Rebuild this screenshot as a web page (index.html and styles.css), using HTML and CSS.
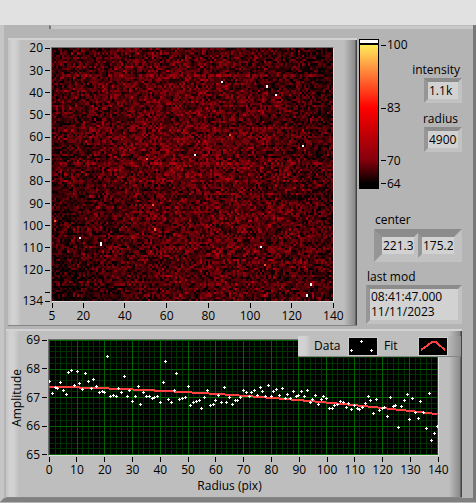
FILE: index.html
```html
<!DOCTYPE html>
<html lang="en">
<head>
    <meta charset="UTF-8">
    <meta name="viewport" content="width=device-width, initial-scale=1.0">
    <title>Radial intensity</title>
    <link rel="stylesheet" href="styles.css">
</head>
<body>
    <div class="top-strip"></div>

    <main class="front">
        <div class="tab-edge"></div>

        <div class="upper">
            <section class="panel image-panel">
                <svg class="axis" id="image-y"></svg>
                <canvas class="image" id="image" width="135" height="115"></canvas>
                <svg class="axis x-axis" id="image-x"></svg>
            </section>

            <section class="side">
                <div class="side-top">
                    <div class="ramp">
                        <div class="ramp-over"></div>
                        <div class="ramp-colors"></div>
                    </div>
                    <svg class="ramp-axis" id="ramp-axis"></svg>
                    <div class="readouts">
                        <label for="intensity">intensity</label>
                        <input type="text" id="intensity" class="field" value="1.1k" readonly>
                        <label for="radius" class="radius-label">radius</label>
                        <input type="text" id="radius" class="field" value="49000" readonly>
                    </div>
                </div>

                <div class="center-group">
                    <label for="center-x">center</label>
                    <div class="cluster">
                        <input type="text" id="center-x" class="field" value="221.36" readonly>
                        <input type="text" class="field" value="175.24" aria-label="center y" readonly>
                    </div>
                </div>

                <div class="mod-group">
                    <label for="last-mod">last mod</label>
                    <textarea id="last-mod" class="field" rows="2" readonly>08:41:47.000
11/11/2023</textarea>
                </div>
            </section>
        </div>

        <section class="panel graph-panel">
            <div class="y-title">Amplitude</div>
            <svg class="axis" id="graph-y"></svg>
            <svg class="plot" id="plot" viewBox="0 0 389 115" preserveAspectRatio="none">
                <path class="minor" id="minor"/>
                <path class="major" id="major"/>
                <path class="fit" id="fit"/>
                <path class="points" id="points"/>
            </svg>
            <svg class="axis x-axis" id="graph-x"></svg>
            <div class="x-title">Radius (pix)</div>

            <div class="legend">
                <span class="legend-data">Data</span>
                <svg class="swatch" width="28" height="17">
                    <path class="points" d="M1 12.5h3M2.5 11v3M11 3.5h3M12.5 2v3M21 12.5h3M22.5 11v3"/>
                </svg>
                <span class="legend-fit">Fit</span>
                <svg class="swatch" width="28" height="17">
                    <path class="fit" d="M2 12L14 3.5h2L26 12"/>
                </svg>
            </div>
        </section>
    </main>

    <script src="script.js"></script>
</body>
</html>
```

FILE: styles.css
```css
* {
    box-sizing: border-box;
}
body {
    margin: 0;
    background-color: #b4b4b4;
    color: #000;
    font-family: "Open Sans", "Noto Sans", sans-serif;
    font-size: 12px;
    line-height: 16px;
}
label {
    display: block;
}
.top-strip {
    height: 25px;
    background-color: #e1e1e1;
}
.front {
    padding: 0 11px 0 2px;
    border-left: 4px solid #c6c6c6;
    border-right: 3px solid #787878;
    border-bottom: 4px solid #808080;
}
.tab-edge {
    height: 4px;
    margin: 0 -11px 9px 43px;
    border-left: 2px solid #777;
    border-top: 1px solid #bcbcbc;
    background-color: #c8c8c8;
}
.upper {
    display: flex;
    padding-left: 2px;
}

/* Raised panels */
.panel {
    display: grid;
    border-top: 2px solid #d2d2d2;
    border-bottom: 1px solid #858585;
    background:
        linear-gradient(to right, #c4c4c4, #d2d2d2 4px, #d0d0d0 8px, #bebebe) left / 13px 100% no-repeat,
        linear-gradient(to right, #bebebe, #8a8a8a 11px, #444 12px) right / 13px 100% no-repeat,
        #bebebe;
}
.image-panel {
    flex: 1;
    grid-template-columns: 31px 1fr;
    padding: 7px 23px 1px 12px;
}
.graph-panel {
    position: relative;
    grid-template-columns: 14px 24px 1fr;
    margin-top: 3px;
    padding: 8px 23px 3px 4px;
}
.image {
    width: 100%;
    height: 255px;
    border: 1px solid #6e6e6e;
    border-right-color: #ddd;
    border-bottom-color: #ddd;
    image-rendering: pixelated;
}

/* Axes */
.axis {
    width: 100%;
    height: 0;
    min-height: 100%;
    overflow: visible;
}
.x-axis {
    height: 22px;
}
.image-panel .x-axis {
    grid-column: 2;
}
.graph-panel .x-axis {
    grid-column: 3;
}
.axis line,
.ramp-axis line {
    stroke: #000;
    shape-rendering: crispEdges;
}

/* Color ramp and readouts */
.side {
    width: 105px;
    padding-top: 1px;
}
.side-top {
    display: flex;
    padding-left: 2px;
}
.ramp {
    width: 20px;
    height: 150px;
    border: 1px solid #000;
}
.ramp-over {
    height: 5px;
    background-color: #fff;
    border-bottom: 2px solid #000;
}
.ramp-colors {
    height: 143px;
    background: linear-gradient(#ffec5a, #ff9440 16%, #f00 44%, #82000c 81%, #000 97%);
}
.ramp-axis {
    width: 28px;
    height: 150px;
    overflow: visible;
}
.readouts {
    display: flex;
    flex: 1;
    flex-direction: column;
    align-items: flex-end;
    padding-top: 23px;
}
.readouts label {
    margin-right: 2px;
}
.readouts .radius-label {
    margin: 8px 4px 0 0;
}
.field {
    display: block;
    margin: 0;
    border: 4px solid;
    border-color: #8c8c8c #c2c2c2 #c2c2c2 #969696;
    border-radius: 0;
    padding: 0 1px;
    background-color: #d2d2d2;
    color: #000;
    font: inherit;
    outline: none;
    resize: none;
    overflow: hidden;
}
.readouts .field {
    width: 38px;
    height: 25px;
}
.center-group {
    padding: 23px 0 0 17px;
}
.center-group label {
    padding: 0 0 1px 1px;
}
.cluster {
    display: flex;
    height: 33px;
    border: 4px solid;
    border-color: #8c8c8c #c2c2c2 #c2c2c2 #969696;
}
.cluster .field {
    width: 50%;
    height: 25px;
    padding: 0 1px;
}
.mod-group {
    padding: 7px 0 0 9px;
}
.mod-group label {
    padding-left: 1px;
}
.mod-group .field {
    width: 100%;
    height: 39px;
    line-height: 15px;
}

/* Graph */
.plot {
    width: 100%;
    height: 117px;
    border: 1px solid #6e6e6e;
    border-right-color: #ddd;
    border-bottom-color: #ddd;
    background-color: #000;
}
.minor,
.major,
.points,
.fit {
    fill: none;
    shape-rendering: crispEdges;
}
.minor {
    stroke: #003200;
}
.major {
    stroke: #006400;
}
.points {
    stroke: #fff;
}
.fit {
    stroke: #ff4141;
    stroke-width: 2;
}
.y-title {
    grid-column: 1;
    justify-self: center;
    align-self: center;
    line-height: 14px;
    writing-mode: vertical-rl;
    transform: rotate(180deg);
}
.x-title {
    grid-column: 3;
    padding-right: 28px;
    text-align: center;
}
.legend {
    position: absolute;
    top: 5px;
    right: 1px;
    display: flex;
    align-items: center;
    width: 163px;
    height: 21px;
    padding-left: 16px;
    border-bottom: 1px solid #858585;
    background: linear-gradient(to right, #d2d2d2, #d2d2d2 7px, #bebebe 13px, #bebebe 148px, #909090);
}
.legend-data {
    width: 35px;
}
.legend-fit {
    width: 42px;
    padding-left: 7px;
}
.swatch {
    background-color: #000;
    box-shadow: 0 0 0 1px #ccc;
}
```

FILE: script.js
```js
const SVG_NS = 'http://www.w3.org/2000/svg';

function addNode(svg, name, attrs, text) {
    const node = document.createElementNS(SVG_NS, name);
    for (const key in attrs) {
        node.setAttribute(key, attrs[key]);
    }
    if (text) {
        node.textContent = text;
    }
    svg.appendChild(node);
}

// ticks: [label, position from 0 to 1]
function drawXAxis(id, ticks) {
    const svg = document.getElementById(id);
    ticks.forEach(([label, pos]) => {
        const x = pos * 100 + '%';
        addNode(svg, 'line', { x1: x, x2: x, y1: 1, y2: 6 });
        addNode(svg, 'text', { x: x, y: 18, 'text-anchor': 'middle' }, label);
    });
}

function drawYAxis(id, ticks, width) {
    const svg = document.getElementById(id);
    ticks.forEach(([label, pos]) => {
        const y = pos * 100 + '%';
        addNode(svg, 'line', { x1: width - 6, x2: width - 1, y1: y, y2: y });
        addNode(svg, 'text', { x: width - 8, y: y, dy: 4, 'text-anchor': 'end' }, label);
    });
}

// Image axes
const imageY = [20, 30, 40, 50, 60, 70, 80, 90, 100, 110, 120, 130, 134];
drawYAxis('image-y', imageY.map(v => [v === 130 ? '' : String(v), (v - 19.4) / 115]), 31);
const imageX = [5, 20, 40, 60, 80, 100, 120, 140];
drawXAxis('image-x', imageX.map(v => [String(v), (v - 4.5) / 135.8]));

// Ramp axis
const rampTicks = [['100', 0.04], ['83', 0.46], ['70', 0.81], ['64', 0.965]];
const rampAxis = document.getElementById('ramp-axis');
rampTicks.forEach(([label, pos]) => {
    const y = pos * 100 + '%';
    addNode(rampAxis, 'line', { x1: 2, x2: 7, y1: y, y2: y });
    addNode(rampAxis, 'text', { x: 8, y: y, dy: 4 }, label);
});

// Sensor image
const COLS = 135;
const ROWS = 115;
const brightRows = [12, 36, 52, 60];
const hotPixels = [
    [81, 15, 'w'], [103, 17, 'w'], [107, 21, 'w'], [68, 48, 'w'], [120, 44, 'w'],
    [13, 86, 'w'], [23, 88, 'w'], [23, 89, 'w'], [100, 90, 'w'], [124, 107, 'w'],
    [122, 112, 'w'], [85, 39, 'o'], [45, 50, 'o'], [1, 78, 'o'], [48, 71, 'o'],
    [49, 82, 'o'], [102, 98, 'o']
];

let seed = 4711;
function random() {
    seed = (seed * 1664525 + 1013904223) % 4294967296;
    return seed / 4294967296;
}

function drawImage() {
    const ctx = document.getElementById('image').getContext('2d');
    for (let row = 0; row < ROWS; row++) {
        let stripe = (random() - 0.5) * 24;
        if (brightRows.includes(row)) stripe = 28;
        for (let col = 0; col < COLS; col++) {
            const dx = (col - 67) / 67;
            const dy = (row - 50) / 60;
            const noise = (random() + random() + random() - 1.5) * 86;
            const red = 90 - 34 * dx * dx - 14 * dy * dy + 16 * dx * dy + stripe + noise;
            const r = Math.round(Math.max(0, Math.min(185, red)));
            ctx.fillStyle = 'rgb(' + r + ', 0, ' + Math.round(r * 0.08) + ')';
            ctx.fillRect(col, row, 1, 1);
        }
    }
    hotPixels.forEach(([col, row, kind]) => {
        ctx.fillStyle = kind === 'w' ? '#fff' : '#ff5020';
        ctx.fillRect(col, row, 1, 1);
    });
}
drawImage();

// Radial graph, one sample per pixel of radius
const amplitude = [
    67.55, 67.15, 67.35, 67.32, 67.53, 67.25, 67.11, 67.88, 67.94, 67.42,
    67.91, 67.49, 67.28, 67.84, 67.56, 67.32, 67.63, 67.39, 67.18, 67.21,
    67.18, 68.43, 67.04, 67.07, 67.04, 67.32, 67.18, 67.73, 67.04, 67.25,
    66.86, 67.04, 67.39, 66.76, 67.18, 67.04, 67.04, 66.97, 67.00, 67.04,
    66.83, 67.53, 68.26, 66.93, 66.83, 67.25, 67.84, 66.93, 66.97, 67.00,
    67.39, 66.72, 66.83, 66.86, 66.90, 66.62, 67.00, 67.25, 66.72, 66.76,
    66.90, 67.07, 66.83, 67.35, 66.83, 67.00, 66.76, 66.90, 66.90, 67.00,
    67.25, 67.18, 67.04, 67.18, 67.25, 67.07, 67.35, 67.21, 67.04, 67.42,
    67.04, 67.21, 67.28, 67.07, 67.32, 66.97, 67.11, 66.97, 67.21, 67.04,
    67.07, 67.21, 67.04, 67.25, 66.83, 66.93, 67.07, 66.76, 66.93, 67.04,
    66.97, 66.62, 66.62, 66.72, 66.76, 66.86, 66.83, 66.65, 66.79, 66.58,
    66.72, 66.62, 66.58, 66.65, 66.79, 67.04, 66.90, 66.44, 66.93, 66.55,
    66.62, 66.65, 66.34, 67.00, 66.69, 66.72, 65.95, 66.69, 66.90, 67.11,
    66.23, 66.97, 66.48, 66.27, 66.86, 66.48, 65.92, 67.14, 65.50, 65.74,
    65.99
];
const px = r => Math.round(r / 140 * 388) + 0.5;
const py = a => Math.round((69 - a) / 4 * 114) + 0.5;

function drawGraph() {
    let minor = '';
    let major = '';
    for (let r = 0; r <= 140; r += 2) {
        const line = 'M' + px(r) + ' 0V115';
        if (r % 10 === 0) major += line; else minor += line;
    }
    for (let i = 0; i <= 20; i++) {
        const line = 'M0 ' + py(65 + i / 5) + 'H389';
        if (i % 5 === 0) major += line; else minor += line;
    }
    document.getElementById('minor').setAttribute('d', minor);
    document.getElementById('major').setAttribute('d', major);

    let points = '';
    let fit = '';
    amplitude.forEach((a, r) => {
        const x = px(r);
        const y = py(a);
        points += 'M' + (x - 1.5) + ' ' + y + 'h3M' + x + ' ' + (y - 1.5) + 'v3';
        const f = 67.38 - 0.0023 * r - 0.0000327 * r * r;
        fit += (r ? 'L' : 'M') + x + ' ' + ((69 - f) / 4 * 114 + 0.5);
    });
    document.getElementById('points').setAttribute('d', points);
    document.getElementById('fit').setAttribute('d', fit);
}
drawGraph();

const graphY = [69, 68, 67, 66, 65];
drawYAxis('graph-y', graphY.map(v => [String(v), (69 - v) / 4 * 0.98 + 0.01]), 24);
const graphX = [];
for (let r = 0; r <= 140; r += 10) {
    graphX.push([String(r), r / 140 * 0.995 + 0.003]);
}
drawXAxis('graph-x', graphX);
```
